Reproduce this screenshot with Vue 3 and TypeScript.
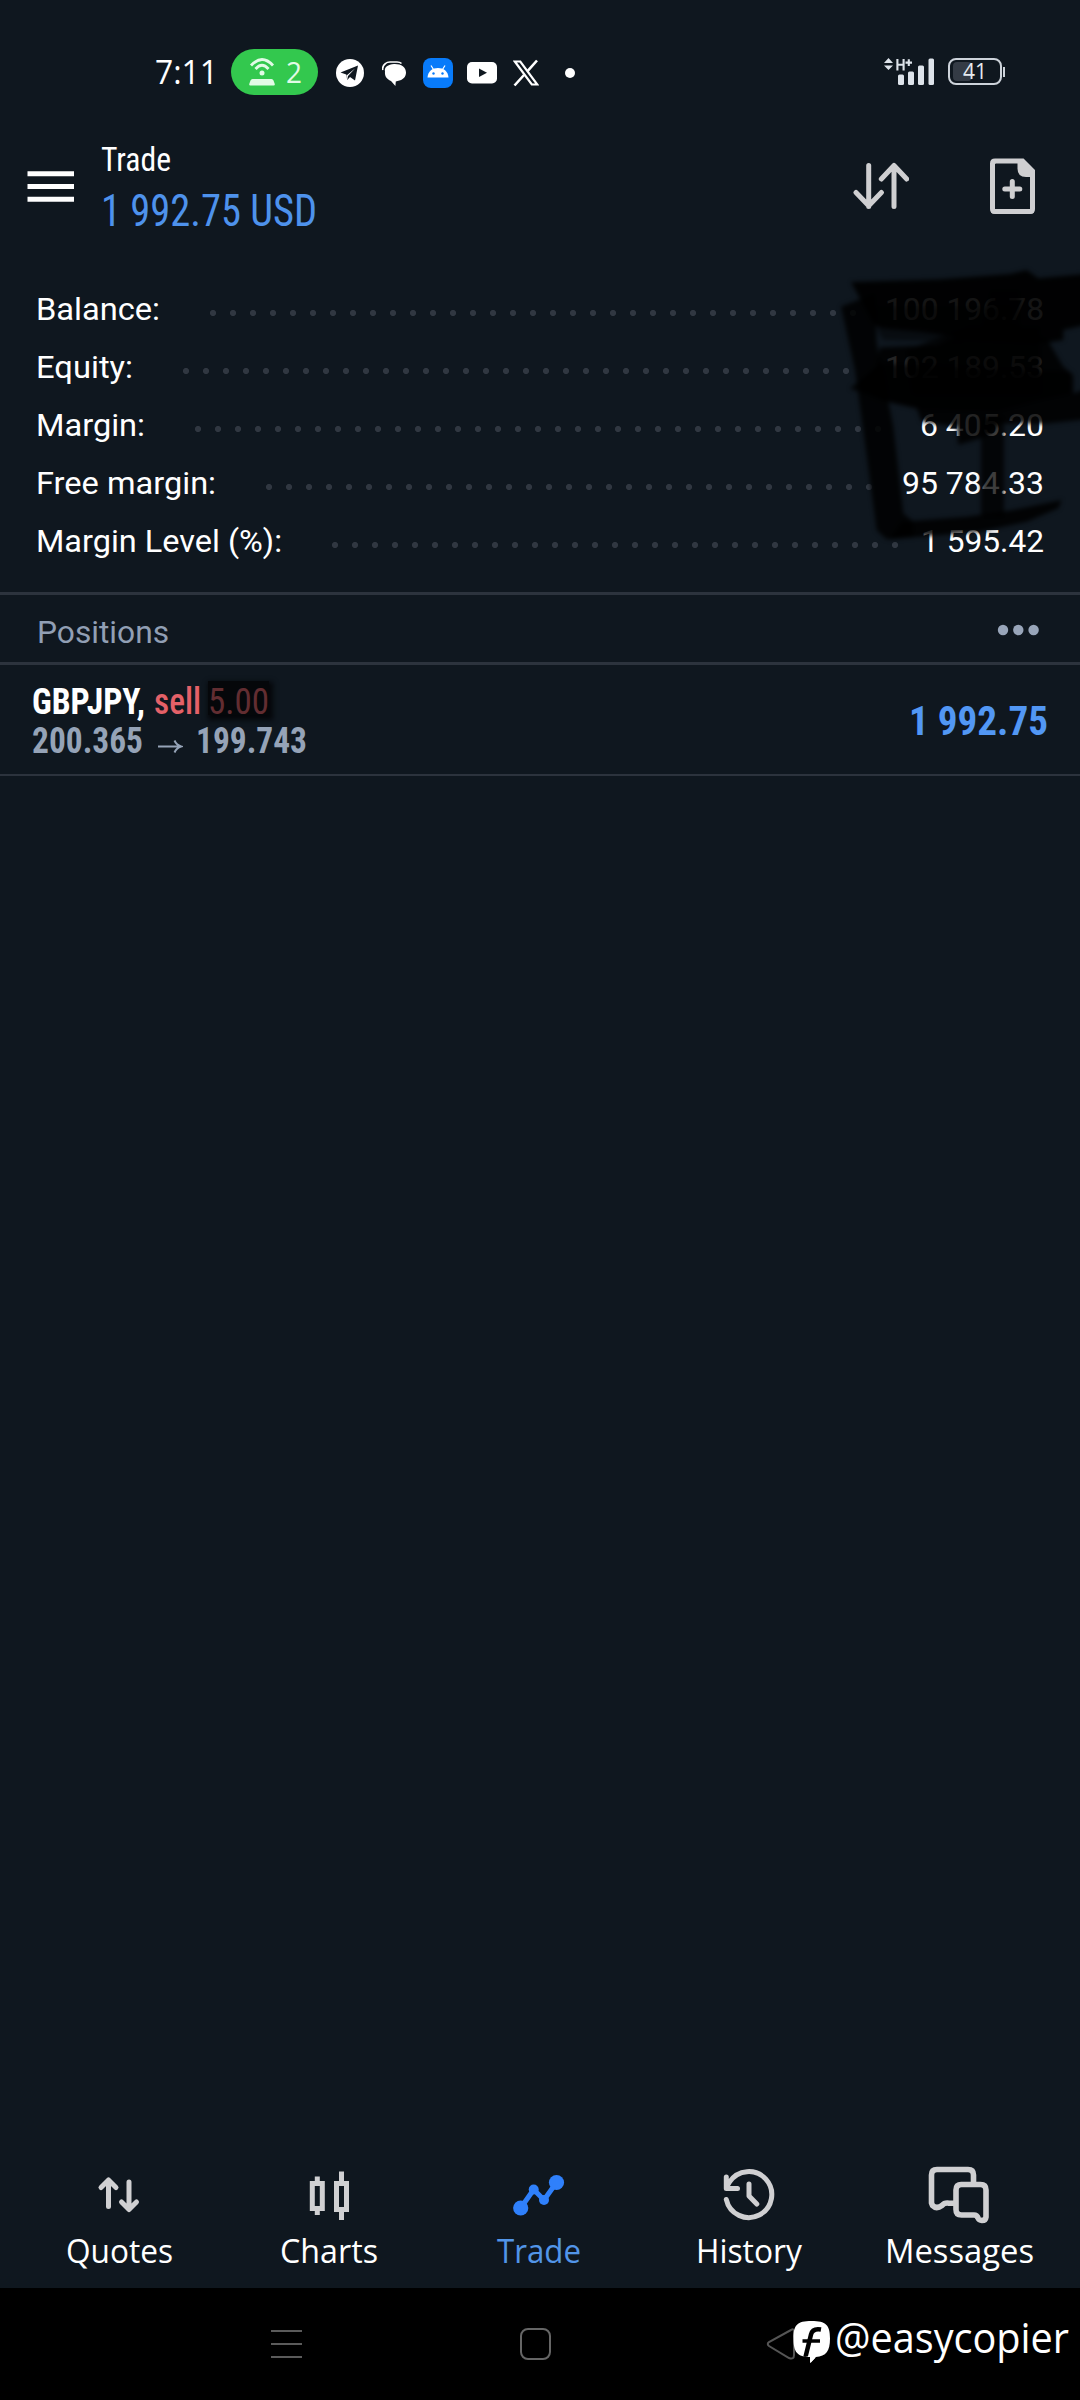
<script setup lang="ts">
import { h, type FunctionalComponent } from 'vue'

interface FitProps { t: string; w: number; h: number; b: number; s: number }

// Single line of text fitted to a fixed advance width; b is the baseline offset.
const Fit: FunctionalComponent<FitProps> = (p) =>
  h('svg', { width: p.w, height: p.h, style: { display: 'block', flex: 'none', overflow: 'visible' } }, [
    h('text', { x: 0, y: p.b, 'font-size': p.s, textLength: p.w, lengthAdjust: 'spacingAndGlyphs', fill: 'currentColor' }, p.t),
  ])
Fit.props = ['t', 'w', 'h', 'b', 's']

const rows = [
  { label: 'Balance:', lw: 124, dots: 33, value: '100 196.78', vw: 159 },
  { label: 'Equity:', lw: 97, dots: 34, value: '102 189.53', vw: 159 },
  { label: 'Margin:', lw: 109, dots: 35, value: '6 405.20', vw: 124 },
  { label: 'Free margin:', lw: 180, dots: 31, value: '95 784.33', vw: 142 },
  { label: 'Margin Level (%):', lw: 246, dots: 29, value: '1 595.42', vw: 123 },
]

const tabs = [
  { id: 'quotes', label: 'Quotes', w: 107 },
  { id: 'charts', label: 'Charts', w: 98 },
  { id: 'trade', label: 'Trade', w: 84 },
  { id: 'history', label: 'History', w: 106 },
  { id: 'messages', label: 'Messages', w: 149 },
]
</script>

<template>
  <div class="screen">
    <header class="status">
      <Fit class="time" t="7:11" :w="63" :h="46" :b="35" :s="32" />
      <div class="hotspot">
        <svg width="26" height="30" viewBox="0 0 26 30" fill="none" stroke="#e2fbe6" stroke-width="2.8">
          <path d="M2 8.500Q13-3.500 24 8.500M6.500 12Q13 4.500 19.500 12" />
          <circle cx="13" cy="16" r="2.500" fill="#e2fbe6" stroke="none" />
          <path d="M3.500 22h19q1.500 0 2 1.500l1.200 3.300q.5 1.700-1 1.700H1.300q-1.500 0-1-1.700l1.200-3.300Q2 22 3.500 22Z" fill="#e2fbe6" stroke="none" />
        </svg>
        <Fit t="2" :w="16" :h="46" :b="34" :s="30" />
      </div>
      <div class="notifs">
        <svg width="28" height="30" viewBox="0 0 28 30"><circle cx="14" cy="15" r="14" fill="#fff" /><path d="M4.500 14.500 22 7.500l-3 15-5-3.600-2.800 3-.9-5.300Z" fill="#0f171f" /><path d="M10.500 17.500 19 10.500l-7 7.600-.8 4Z" fill="#fff" /></svg>
        <svg width="25" height="30" viewBox="0 0 25 30"><path d="M.8 12Q0 8 3.500 5.500 5 4 8 4H15Q18 4 19.500 5.500" fill="none" stroke="#fff" stroke-width="1.600" /><path d="M3 13.500C2 9 6 6.500 12 6c7-.3 12 3 12 8.500 0 4.500-3 7.500-8.500 8.500l-1.700.5-.4 4.500-4.400-5C4.500 21 2.500 18 3 13.500Z" fill="#fff" /></svg>
        <svg width="30" height="30" viewBox="0 0 30 30"><rect width="30" height="30" rx="8" fill="#087bfa" /><path d="M4.500 19.500C5 13 9.500 10 15 10s10 3 10.500 9.500Z" fill="#fff" /><path d="M10.500 11.500 8 7.500M19.500 11.500 22 7.500" stroke="#fff" stroke-width="1.200" /><circle cx="10.500" cy="15.500" r="1.200" fill="#087bfa" /><circle cx="19.500" cy="15.500" r="1.200" fill="#087bfa" /></svg>
        <svg width="30" height="30" viewBox="0 0 30 30"><rect y="4" width="30" height="21.500" rx="5" fill="#fff" /><path d="m12 10.500 8 4.300-8 4.300Z" fill="#0f171f" /></svg>
        <svg width="26" height="30" viewBox="0 0 26 30" fill="none" stroke="#fff"><path d="M1.800 3.500h5.500l17 23h-5.500Z" stroke-width="2.200" /><path d="M24 2.500 14.500 13.200M11 17 1.500 27.500" stroke-width="2.600" /></svg>
        <i class="more-dot" />
      </div>
      <svg class="signal" width="52" height="30" viewBox="0 0 52 30" fill="#dde3ea">
        <path d="m4.500 0 4.500 5H0ZM4.500 12 0 7.500h9Z" />
        <path d="M13.400 1v11.500M19.600 1v11.500M13.400 6.700h6.200M21.500 4.600h6.500M24.800 1.300v6.600" fill="none" stroke="#dde3ea" stroke-width="2.100" />
        <rect x="14" y="16.500" width="6" height="10.500" rx="1.500" /><rect x="24" y="13.500" width="6" height="13.500" rx="1.500" />
        <rect x="34" y="7.500" width="6" height="19.500" rx="1.500" /><rect x="44.500" y=".5" width="5.500" height="26.500" rx="1.500" />
      </svg>
      <div class="battery"><i class="charge" /><Fit t="41" :w="24" :h="24" :b="19" :s="22" /></div>
    </header>

    <div class="appbar">
      <svg width="48" height="32" viewBox="0 0 48 32" class="burger"><path d="M.5 2.800h46.500M.5 15.500h46.500M.5 28.300h46.500" stroke="#fff" stroke-width="5" /></svg>
      <div class="titles">
        <Fit class="title" t="Trade" :w="70" :h="40" :b="31" :s="34" />
        <Fit class="amount" t="1 992.75 USD" :w="216" :h="55" :b="46" :s="43.500" />
      </div>
      <svg class="sort" width="56" height="48" viewBox="0 0 56 48" fill="none" stroke="#cfcfd1" stroke-width="5" stroke-linecap="round" stroke-linejoin="round">
        <path d="M15.700 4.500v41M3 31.500l12.700 13.300 12.700-13.300M41 45.500V4.500M28.300 18 41 4.500 53.700 18" />
      </svg>
      <svg class="neworder" width="47" height="57" viewBox="0 0 47 57" fill="none" stroke="#cfcfd1" stroke-width="5">
        <path d="M6 3h27.500L43.500 13v38q0 2.500-2.500 2.500H6q-2.500 0-2.500-2.500V5.500Q3.500 3 6 3Z" />
        <path d="M28.500 3h5.500l10.500 11v5H37q-8.500 0-8.500-8.500Z" fill="#cfcfd1" stroke="none" />
        <path d="M4 6.500v-3h3M4 50.500v3h3M43 50.500v3h-3" stroke-width="4" stroke-linejoin="round" />
        <path d="M23.300 23.500v15M15.800 31h15" stroke-linecap="round" />
      </svg>
    </div>

    <section class="summary">
      <div v-for="r in rows" :key="r.label" class="row">
        <Fit :t="r.label" :w="r.lw" :h="58" :b="39" :s="32" />
        <i class="leader" :style="{ width: r.dots * 20 - 14 + 'px' }" />
        <Fit class="value" :t="r.value" :w="r.vw" :h="58" :b="39" :s="32" />
      </div>
      <svg class="scribble" width="300" height="310" viewBox="0 0 900 930">
        <defs><filter id="soft" x="-10%" y="-10%" width="120%" height="120%"><feGaussianBlur stdDeviation="7" /></filter></defs>
        <g filter="url(#soft)" fill="#000">
          <path d="M213 66 480 58 690 42 740 30 775 55 915 42V195L850 210V240L800 248 560 235 420 215 300 205 280 190Z" opacity=".92" />
          <path d="M183 140 285 100 290 250 340 500 370 760 400 785V830L320 838 290 810 262 600 225 330Z" opacity=".84" />
          <path d="M210 385 290 320 300 262 470 255 560 215 800 235 850 320 880 345V400L915 388V478L790 492 660 490 620 530 535 555 530 500 425 485 410 445 320 425Z" opacity=".86" />
          <path d="M240 365 300 310 650 330 870 335 875 400 780 420 650 455 430 450 310 420Z" opacity=".7" />
          <path d="M380 270 560 200H780V400H400Z" opacity=".7" />
          <path d="M630 90H720V240H600Z" opacity=".6" />
          <path d="M285 140H690V200H285Z" opacity=".4" />
          <path d="M603 470H672V770H603Z" opacity=".76" />
          <path d="M365 785 560 770 700 750 845 720 835 745 740 785 600 815 330 838Z" opacity=".86" />
          <path d="M290 205 560 207 545 245 310 240Z" opacity=".45" />
        </g>
      </svg>
    </section>

    <div class="section-head">
      <Fit t="Positions" :w="132" :h="67" :b="48" :s="32" />
      <svg width="42" height="12" viewBox="0 0 42 12" fill="#98a5b9"><circle cx="6" cy="6" r="5.200" /><circle cx="21.300" cy="6" r="5.200" /><circle cx="36.600" cy="6" r="5.200" /></svg>
    </div>

    <div class="position">
      <div class="pos-left">
        <div class="line">
          <Fit class="symbol" t="GBPJPY," :w="113" :h="39" :b="33" :s="37.500" />
          <Fit class="sell" t="sell" :w="47" :h="39" :b="33" :s="37.500" />
          <span class="volume"><Fit t="5.00" :w="61" :h="39" :b="33" :s="37.500" /></span>
        </div>
        <div class="line prices">
          <Fit t="200.365" :w="111" :h="39" :b="33" :s="37" />
          <svg width="26" height="39" viewBox="0 0 26 39" fill="none" stroke="#95a3b7" stroke-width="2"><path d="M1 26.500h23M17.500 20.500q2 4.500 6.500 6-4.500 1.500-6.500 6" /></svg>
          <Fit t="199.743" :w="111" :h="39" :b="33" :s="37" />
        </div>
      </div>
      <Fit class="profit" t="1 992.75" :w="139" :h="109" :b="70" :s="41" />
    </div>

    <main class="empty" />

    <nav class="tabs">
      <div v-for="t in tabs" :key="t.id" class="tab" :class="{ active: t.id === 'trade' }">
        <svg width="64" height="64" viewBox="0 0 64 64" fill="none" stroke="currentColor" stroke-width="5" stroke-linecap="round" stroke-linejoin="round">
          <path v-if="t.id === 'quotes'" d="M21.500 44.500V18M14 25.500l7.500-7.500 7.500 7.500M42 20v27M34.500 40l7.500 7.500 7.500-7.500" />
          <g v-else-if="t.id === 'charts'" stroke-linecap="butt" stroke-linejoin="miter"><path d="M20.300 14.500v7M20.300 47v6M44.500 9.500v11M44.500 47v11" /><path d="M15.300 21.500h10v25h-10ZM39.500 21.500h10v26h-10Z" /></g>
          <g v-else-if="t.id === 'trade'"><path d="M13.700 46 26.700 27.500 37 38 49.500 20.500" /><g fill="currentColor" stroke="none"><circle cx="13.700" cy="46" r="7.600" /><circle cx="26.700" cy="27.500" r="5" /><circle cx="37" cy="38" r="5" /><circle cx="49.500" cy="20.500" r="7.600" /></g></g>
          <path v-else-if="t.id === 'history'" d="M9.300 37.500A23 23 0 1 0 12.500 20L9.500 25M9.300 15v11.500H20.500M32 22v12l7.800 8" />
          <g v-else><path d="M27 41.200H22Q17.500 40.500 15 43.500 9.500 47.500 5.500 43.500L4.500 41V13Q4.500 7.500 10 7.500H41Q46.500 7.500 46.500 13V22" stroke-width="5.600" /><path d="M34 22.500H53.500Q59 22.500 59 28V55Q58.500 58.500 55 58.500 52 58.300 51 56 50 53 47 53H34.500Q29 53 29 47.500V28Q29 22.500 34.500 22.500Z" stroke-width="5.600" /></g>
        </svg>
        <Fit class="tab-label" :t="t.label" :w="t.w" :h="38" :b="30" :s="32" />
      </div>
    </nav>

    <footer class="sysnav">
      <svg class="recent" width="34" height="30" viewBox="0 0 34 30" stroke="#5b5b5b" stroke-width="2"><path d="M1 2h31M1 15h31M1 28h31" /></svg>
      <svg class="home" width="34" height="34" viewBox="0 0 34 34" fill="none" stroke="#666" stroke-width="2"><rect x="2" y="2" width="29" height="30" rx="7" /></svg>
      <svg class="back" width="34" height="34" viewBox="0 0 34 34" fill="none" stroke="#555" stroke-width="2"><path d="M26 3 4 15q-2.500 2 0 4L24 31q5 2 5-3V5q0-4-3-2Z" /></svg>
      <div class="handle">
        <svg width="38" height="44" viewBox="0 0 38 44"><path d="M18.500 1C33 1 37 5 37 18.500c0 13-4 17.500-14 18.500l-5.500 6v-6C4 37 .5 32 .5 18.500.5 5 4 1 18.500 1Z" fill="#fff" /><path d="M28 9.500q-8.500-1.500-10 5L12.500 37" fill="none" stroke="#000" stroke-width="4.500" /><path d="M9.500 21h17.500" stroke="#000" stroke-width="3.500" /><path d="m12 36 5 1v6l5-5-4-2Z" fill="#fff" /></svg>
        <Fit class="at" t="@easycopier" :w="234" :h="60" :b="33" :s="42" />
      </div>
    </footer>
  </div>
</template>

<style>
body { background: #0f171f; }
</style>

<style scoped>
.screen { width: 1080px; height: 2400px; display: flex; flex-direction: column; background: #0f171f; color: #fff; font-family: Roboto, "Liberation Sans", sans-serif; overflow: hidden; }
.screen svg { flex: none; display: block; }
.status { height: 130px; padding: 49px 0 0 155px; box-sizing: border-box; display: flex; align-items: flex-start; flex: none; font-family: "Open Sans", Roboto, sans-serif; }
.hotspot { width: 87px; height: 46px; margin-left: 13px; border-radius: 23px; background: #33c84e; box-sizing: border-box; padding-left: 18px; display: flex; align-items: center; gap: 11px; color: #e2fbe6; }
.notifs { display: flex; align-items: center; height: 48px; margin-left: 18px; gap: 15px; }
.notifs svg:nth-child(2) { margin-left: 3px; }
.notifs svg:nth-child(3) { margin-left: 1px; }
.notifs svg:nth-child(4) { margin-left: -1px; }
.notifs svg:nth-child(5) { margin-left: 1px; }
.more-dot { width: 10px; height: 10px; border-radius: 50%; background: #fff; margin-left: 11px; }
.signal { margin: 9px 0 0 309px; }
.battery { position: relative; width: 54px; height: 27px; margin: 9px 0 0 12px; border: 2px solid #cdd3da; border-radius: 8px; box-sizing: border-box; display: flex; justify-content: center; color: #e6eaef; }
.battery::after { content: ""; position: absolute; right: -5px; top: 7px; width: 2px; height: 10px; background: #cdd3da; }
.charge { position: absolute; left: 3px; top: 2px; width: 19px; height: 19px; border-radius: 4px; background: #343b45; }
.battery svg { position: relative; }
.appbar { height: 151px; flex: none; display: flex; align-items: flex-start; }
.burger { margin: 41px 0 0 27px; }
.titles { margin: 10px 0 0 26px; width: 216px; }
.amount { color: #4e92ec; }
.sort { margin: 31px 0 0 536px; }
.neworder { margin: 28px 0 0 80px; }
.titles, .position { font-stretch: 75%; font-family: "Roboto Condensed", Roboto, sans-serif; }
.summary { position: relative; height: 311px; flex: none; }
.row { height: 58px; display: flex; align-items: flex-start; padding: 0 36px 0 36px; }
.leader { flex: none; height: 6px; margin: 29px 0 0 50px; background: radial-gradient(circle at 3px 3px, #303741 2.700px, transparent 3.400px) 0 0 / 20px 6px repeat-x; }
.value { margin-left: auto; }
.scribble { position: absolute; left: 780px; top: -21px; }
.section-head { height: 73px; box-sizing: border-box; flex: none; border-top: 3px solid #2c333d; border-bottom: 3px solid #2c333d; display: flex; align-items: center; justify-content: space-between; padding: 0 41px 0 37px; color: #919fb4; }
.section-head svg:last-child { margin-top: 3px; }
.position { height: 111px; box-sizing: border-box; flex: none; border-bottom: 2px solid #2c333d; padding: 0 32px 0 32px; display: flex; justify-content: space-between; }
.pos-left { padding-top: 16px; }
.line { display: flex; align-items: flex-start; }
.symbol { font-weight: 700; }
.sell { color: #e46168; margin-left: 9px; font-weight: 500; }
.volume { margin-left: 7px; color: #622d31; height: 34px; margin-bottom: 5px; background: #05070a; box-shadow: 2px 3px 5px 2px #05070a; }
.prices { color: #95a3b7; font-weight: 700; gap: 13.500px; }
.profit { color: #5297f4; font-weight: 700; }
.empty { flex: 1; }
.tabs { height: 126px; flex: none; display: flex; padding: 0 16px 0 14px; }
.tab { width: 210px; display: flex; flex-direction: column; align-items: center; color: #d0d0d2; font-family: "Open Sans", Roboto, sans-serif; }
.tab-label { margin-top: 7px; color: #fff; }
.active { color: #2f80fb; }
.active .tab-label { color: #5295e8; }
.sysnav { height: 112px; flex: none; background: #000; display: flex; align-items: flex-start; position: relative; }
.recent { margin: 41px 0 0 270px; }
.home { margin: 39px 0 0 215px; }
.back { margin: 39px 0 0 212px; }
.handle { position: absolute; left: 793px; top: 32px; display: flex; gap: 4px; font-family: "Open Sans", sans-serif; }
</style>
